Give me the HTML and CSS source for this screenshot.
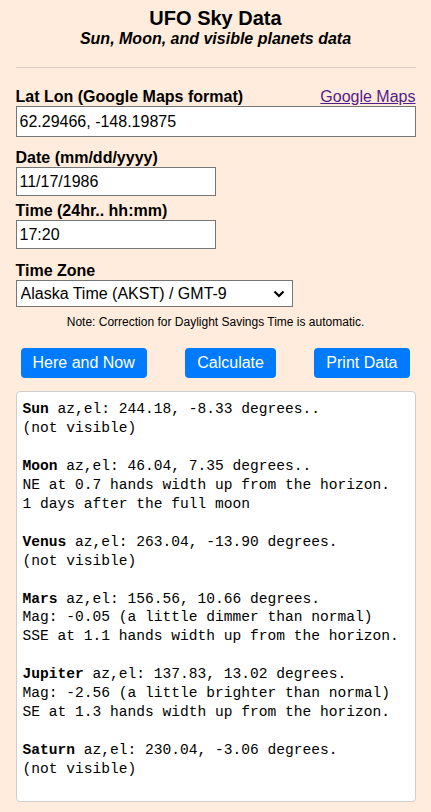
FILE: index.html
```html
<!DOCTYPE html>
<html lang="en">
<head>
<meta charset="utf-8">
<title>UFO Sky Data</title>
<link rel="stylesheet" href="styles.css">
</head>
<body>
<div class="page">
  <header class="head">
    <h1 class="title">UFO Sky Data</h1>
    <p class="subtitle">Sun, Moon, and visible planets data</p>
  </header>
  <hr class="rule">
  <form class="form">
    <div class="row-label">
      <label class="label" for="latlon">Lat Lon (Google Maps format)</label>
      <a class="maplink" href="#">Google Maps</a>
    </div>
    <input id="latlon" class="field field-wide" type="text" value="62.29466, -148.19875">

    <label class="label label-date" for="date">Date (mm/dd/yyyy)</label>
    <input id="date" class="field field-short" type="text" value="11/17/1986">

    <label class="label label-time" for="time">Time (24hr.. hh:mm)</label>
    <input id="time" class="field field-short" type="text" value="17:20">

    <label class="label label-tz" for="tz">Time Zone</label>
    <div class="select-wrap">
      <select id="tz" class="select">
        <option>Alaska Time (AKST) / GMT-9</option>
      </select>
      <svg class="chev" width="12" height="8" viewBox="0 0 12 8"><path d="M1.5 1.5 L6 6 L10.5 1.5" fill="none" stroke="#000" stroke-width="2.2"/></svg>
    </div>
    <p class="note">Note: Correction for Daylight Savings Time is automatic.</p>

    <div class="buttons">
      <button type="button" class="btn">Here and Now</button>
      <button type="button" class="btn">Calculate</button>
      <button type="button" class="btn">Print Data</button>
    </div>
  </form>
  <pre class="output"><b>Sun </b>az,el: 244.18, -8.33 degrees..
(not visible)

<b>Moon </b>az,el: 46.04, 7.35 degrees..
NE at 0.7 hands width up from the horizon.
1 days after the full moon

<b>Venus </b>az,el: 263.04, -13.90 degrees.
(not visible)

<b>Mars </b>az,el: 156.56, 10.66 degrees.
Mag: -0.05 (a little dimmer than normal)
SSE at 1.1 hands width up from the horizon.

<b>Jupiter </b>az,el: 137.83, 13.02 degrees.
Mag: -2.56 (a little brighter than normal)
SE at 1.3 hands width up from the horizon.

<b>Saturn </b>az,el: 230.04, -3.06 degrees.
(not visible)
</pre>
</div>
</body>
</html>
```

FILE: styles.css
```css
html, body {
  margin: 0;
  padding: 0;
  background: #ffecdc;
}
body {
  font-family: "Liberation Sans", Arial, sans-serif;
  color: #000;
}
.page {
  width: 400px;
  margin: 0 auto;
  padding: 0 0 10px;
}
.head {
  text-align: center;
  padding-top: 6px;
}
.title {
  margin: 0;
  font-size: 20px;
  line-height: 24px;
  font-weight: bold;
}
.subtitle {
  margin: 0;
  font-size: 16px;
  line-height: 18px;
  font-weight: bold;
  font-style: italic;
}
.rule {
  margin: 19px 0 0;
  border: 0;
  border-top: 1px solid #dcd0c6;
  height: 0;
}
.form {
  display: flex;
  flex-direction: column;
  align-items: flex-start;
  padding-top: 19px;
}
.row-label {
  display: flex;
  justify-content: space-between;
  align-items: baseline;
  width: 100%;
}
.label {
  font-size: 16px;
  line-height: 19px;
  font-weight: bold;
  display: block;
}
.maplink {
  font-size: 16px;
  line-height: 19px;
  color: #551a8b;
  text-decoration: underline;
}
.field {
  box-sizing: border-box;
  margin: 0;
  border: 1px solid #767676;
  background: #fff;
  font-family: "Liberation Sans", Arial, sans-serif;
  font-size: 16px;
  padding: 1px 3px;
  color: #000;
}
.field-wide {
  width: 400px;
  height: 31px;
}
.field-short {
  width: 200px;
  height: 29px;
}
.label-date {
  margin-top: 11px;
}
.label-time {
  margin-top: 5px;
}
.label-tz {
  margin-top: 12px;
}
.select-wrap {
  position: relative;
  width: 277px;
  height: 27px;
}
.select {
  box-sizing: border-box;
  width: 277px;
  height: 27px;
  appearance: none;
  -webkit-appearance: none;
  border: 1px solid #767676;
  border-radius: 0;
  background: #fff;
  font-family: "Liberation Sans", Arial, sans-serif;
  font-size: 16px;
  color: #000;
  padding: 0 4px;
}
.chev {
  position: absolute;
  right: 8px;
  top: 10px;
  pointer-events: none;
}
.note {
  align-self: stretch;
  text-align: center;
  margin: 8px 0 0;
  font-size: 12px;
  line-height: 14px;
}
.buttons {
  display: flex;
  justify-content: space-between;
  align-self: stretch;
  padding: 0 6px 0 5px;
  margin-top: 19px;
}
.btn {
  background: #007bff;
  color: #fff;
  border: 0;
  border-radius: 4px;
  font-family: "Liberation Sans", Arial, sans-serif;
  font-size: 16px;
  line-height: 18px;
  padding: 6px 12px;
  height: 30px;
}
.output {
  box-sizing: border-box;
  margin: 13px 0 0;
  width: 400px;
  height: 411px;
  background: #fff;
  border: 1px solid #cfcfcf;
  border-radius: 4px;
  padding: 8px 6px;
  font-family: "Liberation Mono", "DejaVu Sans Mono", monospace;
  font-size: 14.581px;
  line-height: 18.95px;
  color: #000;
  white-space: pre;
  overflow: hidden;
}
.output b {
  font-weight: bold;
}
```
